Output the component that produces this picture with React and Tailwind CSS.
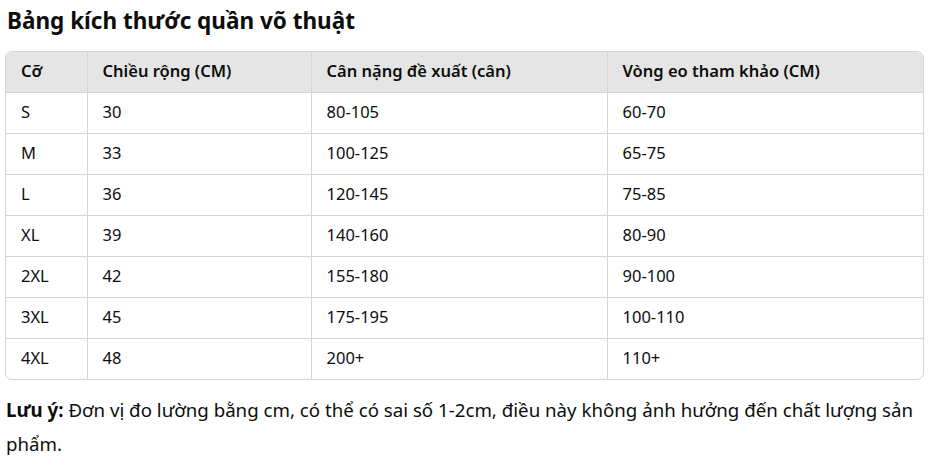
const rows = [
  ["S", "30", "80-105", "60-70"],
  ["M", "33", "100-125", "65-75"],
  ["L", "36", "120-145", "75-85"],
  ["XL", "39", "140-160", "80-90"],
  ["2XL", "42", "155-180", "90-100"],
  ["3XL", "45", "175-195", "100-110"],
  ["4XL", "48", "200+", "110+"],
];

const headers = ["Cỡ", "Chiều rộng (CM)", "Cân nặng đề xuất (cân)", "Vòng eo tham khảo (CM)"];

export default function App() {
  return (
    <div className="bg-white min-h-screen pl-[5px] pr-[19px] text-[#0d0d0d] font-['Noto_Sans',sans-serif]">
      <h3 className="pt-[5px] text-[22.5px] leading-[32px] font-bold pl-[2px]">
        Bảng kích thước quần võ thuật
      </h3>
      <div className="mt-[14px] border border-[#d4d4d4] rounded-[7px] overflow-hidden">
        <table className="w-full table-fixed border-collapse text-[16.5px]">
          <colgroup>
            <col className="w-[81px]" />
            <col className="w-[224px]" />
            <col className="w-[296px]" />
            <col />
          </colgroup>
          <thead>
            <tr className="bg-[#e5e5e5] h-[40px]">
              {headers.map((h, i) => (
                <th
                  key={i}
                  className={
                    "text-left font-semibold px-[15px] border-b border-[#d4d4d4] " +
                    (i < 3 ? "border-r" : "")
                  }
                >
                  {h}
                </th>
              ))}
            </tr>
          </thead>
          <tbody>
            {rows.map((r, ri) => (
              <tr key={ri} className="h-[41px]">
                {r.map((c, ci) => (
                  <td
                    key={ci}
                    className={
                      "px-[15px] border-[#d4d4d4] " +
                      (ri < rows.length - 1 ? "border-b " : "") +
                      (ci < 3 ? "border-r" : "")
                    }
                  >
                    {c}
                  </td>
                ))}
              </tr>
            ))}
          </tbody>
        </table>
      </div>
      <p className="mt-[13px] text-[18.7px] leading-[34px] pl-[1px]">
        <span className="font-bold">Lưu ý: </span>Đơn vị đo lường bằng cm, có thể có sai số 1-2cm, điều này không ảnh hưởng đến chất lượng sản phẩm.
      </p>
    </div>
  );
}
